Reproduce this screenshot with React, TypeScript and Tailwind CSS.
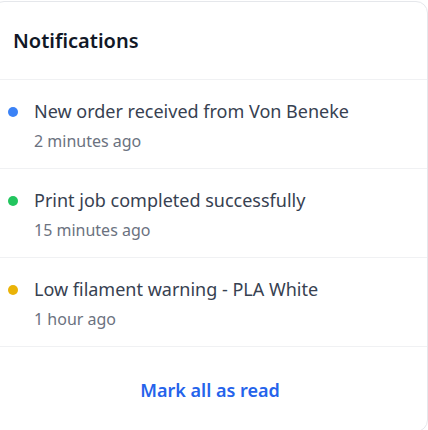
import React from "react";

const items = [
  { title: "New order received from Von Beneke", time: "2 minutes ago", dot: "bg-[#3b82f6]" },
  { title: "Print job completed successfully", time: "15 minutes ago", dot: "bg-[#22c55e]" },
  { title: "Low filament warning - PLA White", time: "1 hour ago", dot: "bg-[#eab308]" },
];

export default function App() {
  return (
    <div className="w-[428px] h-[430px] overflow-hidden bg-white" style={{ fontFamily: '"Noto Sans", sans-serif' }}>
      <div className="mt-px -ml-[8px] w-[436px] rounded-xl border border-[#e5e7eb] bg-white">
        <div className="px-[20px] pt-[25px] pb-6 border-b border-[#f0f1f3]">
          <h2 className="text-xl leading-7 font-semibold text-[#111827]">Notifications</h2>
        </div>
        {items.map((it) => (
          <div key={it.title} className="flex items-start gap-4 pl-[15px] pr-4 pt-[17px] pb-[15px] border-b border-[#f0f1f3]">
            <span className={`mt-[10px] w-[10px] h-[10px] rounded-full shrink-0 ${it.dot}`} />
            <div className="flex flex-col gap-1">
              <p className="text-lg leading-7 text-[#374151]">{it.title}</p>
              <p className="text-base leading-6 text-[#6b7280]">{it.time}</p>
            </div>
          </div>
        ))}
        <div className="p-4">
          <button className="w-full pt-[13px] pb-[11px] text-lg leading-7 font-semibold text-[#2563eb]">Mark all as read</button>
        </div>
      </div>
    </div>
  );
}
